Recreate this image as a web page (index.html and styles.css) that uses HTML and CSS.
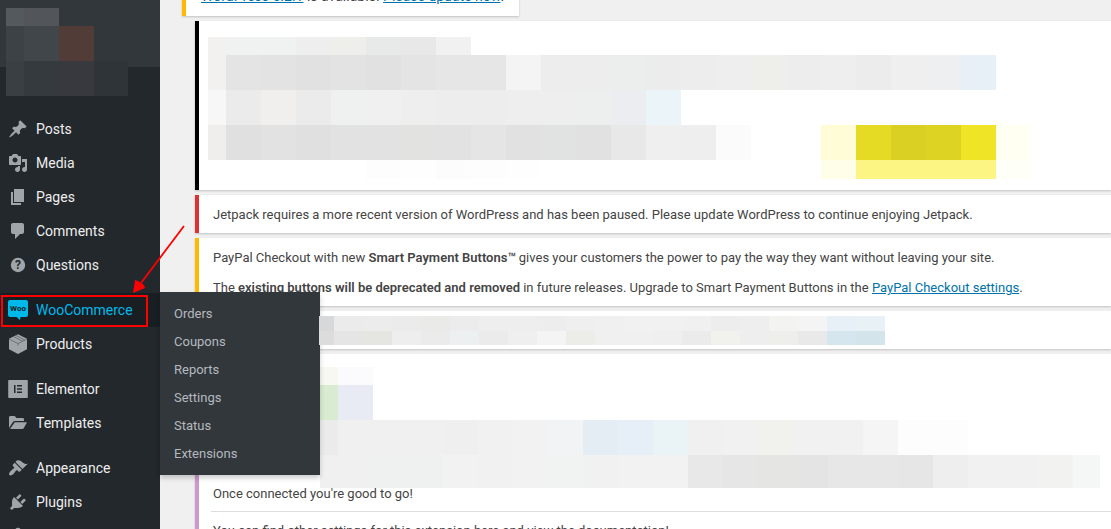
FILE: index.html
```
<!DOCTYPE html>
<html lang="en">
<head>
    <meta charset="UTF-8">
    <meta name="viewport" content="width=device-width, initial-scale=1.0">
    <title>WordPress Admin</title>
    <link rel="stylesheet" href="styles.css">
</head>
<body>
    <div class="admin">
        <nav class="sidebar" aria-label="Main menu">
            <div class="menu-top">
                <div class="mosaic user-mosaic" data-mosaic="user"></div>
            </div>
            <ul class="menu">
                <li class="menu-item">
                    <a href="#"><svg class="icon" viewBox="0 0 20 20"><path d="M10.44 3.02l1.82-1.82 6.36 6.35-1.83 1.82c-1.05-.68-2.48-.57-3.41.36l-.75.75c-.92.93-1.04 2.35-.35 3.41l-1.83 1.82-2.41-2.41-2.8 2.79c-.42.42-3.38 2.71-3.8 2.29s1.86-3.39 2.28-3.81l2.79-2.79L4.1 9.36l1.83-1.82c1.05.69 2.48.57 3.4-.36l.75-.75c.93-.92 1.05-2.35.36-3.41z"/></svg>Posts</a>
                </li>
                <li class="menu-item">
                    <a href="#"><svg class="icon" viewBox="0 0 20 20"><path d="M13 11V4c0-.55-.45-1-1-1h-1.67L9 1H5L3.67 3H2c-.55 0-1 .45-1 1v7c0 .55.45 1 1 1h10c.55 0 1-.45 1-1zM7 4.5c1.38 0 2.5 1.12 2.5 2.5S8.38 9.5 7 9.5 4.5 8.38 4.5 7 5.62 4.5 7 4.5zM14 6h5v10.5c0 1.38-1.12 2.5-2.5 2.5S14 17.88 14 16.5s1.12-2.5 2.5-2.5c.17 0 .34.02.5.05V9h-3V6zm-4 8.05V13h2v3.5c0 1.38-1.12 2.5-2.5 2.5S7 17.88 7 16.5 8.12 14 9.5 14c.17 0 .34.02.5.05z"/></svg>Media</a>
                </li>
                <li class="menu-item">
                    <a href="#"><svg class="icon" viewBox="0 0 20 20"><path d="M6 15V2h10v13H6zm-1 1h8v2H3V5h2v11z"/></svg>Pages</a>
                </li>
                <li class="menu-item">
                    <a href="#"><svg class="icon" viewBox="0 0 20 20"><path d="M5 2h9c1.1 0 2 .9 2 2v7c0 1.1-.9 2-2 2h-2l-5 5v-5H5c-1.1 0-2-.9-2-2V4c0-1.1.9-2 2-2z"/></svg>Comments</a>
                </li>
                <li class="menu-item">
                    <a href="#"><svg class="icon" viewBox="0 0 20 20"><circle cx="10" cy="10" r="7.2"/><text class="icon-help" x="10" y="14">?</text></svg>Questions</a>
                </li>
                <li class="separator"></li>
                <li class="menu-item current">
                    <a href="#"><svg class="icon" viewBox="0 0 20 20"><path d="M2 0h16a2 2 0 0 1 2 2v13a2 2 0 0 1-2 2h-5.500l-.5 3-3.500-3H2a2 2 0 0 1-2-2V2a2 2 0 0 1 2-2z"/><text class="icon-woo" x="10" y="11">Woo</text></svg>WooCommerce</a>
                    <ul class="submenu">
                        <li><a href="#">Orders</a></li>
                        <li><a href="#">Coupons</a></li>
                        <li><a href="#">Reports</a></li>
                        <li><a href="#">Settings</a></li>
                        <li><a href="#">Status</a></li>
                        <li><a href="#">Extensions</a></li>
                    </ul>
                </li>
                <li class="menu-item">
                    <a href="#"><svg class="icon" viewBox="0 0 20 20"><path d="M10 .2l9 4.600v10.400l-9 4.800-9-4.800V4.800z"/><path class="icon-line" d="M1 5l9 4.600L19 5M5.500 2.600l9 4.700M7.800 1.400l9 4.700M10 9.600v2"/></svg>Products</a>
                </li>
                <li class="separator"></li>
                <li class="menu-item">
                    <a href="#"><svg class="icon" viewBox="0 0 20 20"><path fill-rule="evenodd" d="M1 1h18a.8.8 0 0 1 .8.8v16.400a.8.8 0 0 1-.8.800H1a.8.8 0 0 1-.8-.8V1.800A.8.8 0 0 1 1 1zM6 6v8h1.500V6zM9 6v1.500h5V6zM9 9.250v1.500h5v-1.500zM9 12.500V14h5v-1.500z"/></svg>Elementor</a>
                </li>
                <li class="menu-item">
                    <a href="#"><svg class="icon" viewBox="0 0 20 20"><path d="M1 15V4.500C1 3.700 1.600 3 2.400 3h3.800c.6 0 1 .2 1.300.7L8.300 5h6.300c.8 0 1.400.6 1.400 1.400V8H7c-1 0-1.700.4-2.200 1.200z"/><path d="M6.700 9.200H19L15.700 15.300c-.3.500-.7.700-1.200.7H2z"/></svg>Templates</a>
                </li>
                <li class="separator"></li>
                <li class="menu-item">
                    <a href="#"><svg class="icon" viewBox="0 0 20 20"><path d="M14.480 11.060L7.410 3.990l1.500-1.500c.5-.56 2.300-.47 3.510.32 1.210.8 1.430 1.280 2.910 2.100 1.180.64 2.450 1.260 4.450.85zm-.71.710L6.700 4.700 4.930 6.470c-.39.39-.39 1.020 0 1.410l1.060 1.060c.39.39.39 1.030 0 1.420-.6.600-1.430 1.110-2.210 1.690-.35.260-.7.530-1.010.840C1.430 14.230.4 16.080 1.400 17.070c.99 1 2.840-.03 4.180-1.360.31-.31.580-.66.850-1.020.57-.78 1.080-1.610 1.690-2.210.39-.39 1.020-.39 1.410 0l1.060 1.060c.39.39 1.020.39 1.410 0z"/></svg>Appearance</a>
                </li>
                <li class="menu-item">
                    <a href="#"><svg class="icon" viewBox="0 0 20 20"><path d="M13.110 4.360L9.870 7.600 8 5.730l3.240-3.240c.35-.34 1.050-.2 1.560.32.52.51.66 1.210.31 1.550zm-8 1.770l.91-1.120 9.010 9.010-1.190.84c-.71.71-2.630 1.160-3.820 1.160H6.140L4.900 17.260c-.59.59-1.540.59-2.120 0-.59-.58-.59-1.530 0-2.120l1.240-1.240v-3.880c0-1.130.4-3.190 1.090-3.890zm7.260 3.970l3.240-3.240c.34-.35 1.040-.21 1.550.31.52.51.66 1.210.31 1.550l-3.240 3.250z"/></svg>Plugins</a>
                </li>
                <li class="menu-item">
                    <a href="#" aria-label="Users"><svg class="icon" viewBox="0 0 20 20"><ellipse cx="10" cy="5.500" rx="3" ry="3.800"/><path d="M4 18v-4c0-2 2-3.500 4-3.500l2 2 2-2c2 0 4 1.500 4 3.500v4z"/></svg></a>
                </li>
            </ul>
        </nav>

        <main class="content">
            <div class="update-nag"><a href="#">WordPress 5.2.1</a> is available! <a href="#">Please update now</a>.</div>

            <div class="notice notice-black notice-mosaic">
                <div class="mosaic" data-mosaic="banner"></div>
            </div>
            <div class="notice notice-error">
                <p>Jetpack requires a more recent version of WordPress and has been paused. Please update WordPress to continue enjoying Jetpack.</p>
            </div>
            <div class="notice notice-warning">
                <p>PayPal Checkout with new <strong>Smart Payment Buttons™</strong> gives your customers the power to pay the way they want without leaving your site.</p>
                <p>The <strong>existing buttons will be deprecated and removed</strong> in future releases. Upgrade to Smart Payment Buttons in the <a href="#">PayPal Checkout settings</a>.</p>
            </div>
            <div class="notice notice-line">
                <div class="mosaic" data-mosaic="line"></div>
            </div>
            <div class="notice notice-purple">
                <div class="mosaic" data-mosaic="connect"></div>
                <p>Once connected you're good to go!</p>
                <hr>
                <p>You can find other settings for this extension here and view the documentation!</p>
            </div>
        </main>

        <svg class="arrow" viewBox="0 0 56 72" aria-hidden="true">
            <path d="M54 3L11 60" stroke="#f00" stroke-width="1.800"/>
            <path d="M3 70L5 57l3 1 6 4 1 3z" fill="#f00"/>
        </svg>
        <div class="highlight"></div>
    </div>

    <script src="script.js"></script>
</body>
</html>
```
FILE: styles.css
```
* {
    box-sizing: border-box;
}
body {
    margin: 0;
    background-color: #f0f0f0;
    color: #444;
    font-family: 'Segoe UI', Roboto, 'Noto Sans', sans-serif;
    font-size: 13px;
    line-height: 20px;
}
a {
    color: #0073aa;
}
strong {
    font-weight: 600;
}
.admin {
    position: relative;
    display: flex;
    height: 100vh;
    overflow: hidden;
}

/* sidebar */
.sidebar {
    position: relative;
    z-index: 2;
    flex: 0 0 160px;
    background-color: #23282d;
}
.menu-top {
    height: 67px;
    margin-bottom: 45px;
    padding: 8px 6px;
    background-color: #32373c;
}
.menu,
.submenu {
    margin: 0;
    padding: 0;
    list-style: none;
}
.menu-item {
    position: relative;
}
.menu-item > a {
    display: flex;
    align-items: center;
    gap: 8px;
    height: 34px;
    padding: 0 8px;
    color: #eee;
    font-size: 14px;
    text-decoration: none;
}
.separator {
    height: 11px;
}
.icon {
    width: 20px;
    height: 20px;
    fill: #a0a5aa;
}
.icon-help {
    fill: #23282d;
    font-size: 12px;
    font-weight: bold;
    text-anchor: middle;
}
.icon-woo {
    fill: #191e23;
    font-size: 8px;
    font-weight: bold;
    text-anchor: middle;
}
.icon-line {
    fill: none;
    stroke: #6c7177;
    stroke-width: 1;
}
.current > a {
    background-color: #191e23;
    color: #00b9eb;
}
.current .icon {
    fill: #00b9eb;
}
.submenu {
    position: absolute;
    top: -1px;
    left: 160px;
    width: 160px;
    padding: 7px 0 8px;
    background-color: #32373c;
    box-shadow: 0 3px 5px rgba(0,0,0,0.2);
}
.submenu a {
    display: block;
    padding: 5px 14px 3px;
    color: #b4b9be;
    text-decoration: none;
}

/* notices */
.content {
    flex: 1;
    min-width: 0;
    margin-top: -26px;
    padding-left: 22px;
}
.update-nag {
    width: fit-content;
    padding: 12px 15px 10px;
    border-left: 4px solid #ffb900;
    background-color: #fff;
    box-shadow: 0 1px 2px rgba(0,0,0,0.2);
    font-size: 14px;
}
.notice {
    margin: 5px 0 0 13px;
    padding: 1px 12px;
    border-left: 4px solid #000;
    background-color: #fff;
    box-shadow: 0 1px 2px rgba(0,0,0,0.2);
}
.notice p {
    margin: 6px 0;
    padding: 3px 2px 1px;
}
.notice hr {
    margin: 0 -12px 0 0;
    border: 0;
    border-top: 1px solid #ddd;
}
.notice-mosaic {
    padding: 16px 9px 11px;
}
.notice-error {
    border-left-color: #dc3232;
}
.notice-warning {
    border-left-color: #ffb900;
}
.notice-line {
    padding: 5px 120px 4px;
}
.notice-line .mosaic {
    position: relative;
    z-index: 3;
}
.notice-purple {
    border-left-color: #c9c;
    padding-top: 13px;
}
.notice-purple .mosaic {
    margin: 0 0 -13px 109px;
}

/* pixelated areas */
.mosaic svg {
    display: block;
}
.user-mosaic {
    position: absolute;
}

/* annotation */
.highlight {
    position: absolute;
    z-index: 4;
    top: 295px;
    left: 1px;
    width: 147px;
    height: 32px;
    border: 2px solid #f00;
}
.arrow {
    position: absolute;
    z-index: 4;
    top: 223px;
    left: 130px;
    width: 56px;
    height: 72px;
}
```
FILE: script.js
```
// xs: column edges, ys: row edges, rows: one colour per column ('-' = empty)
const mosaics = {
    user: {
        xs: [0, 18, 53, 88, 122],
        ys: [0, 18, 53, 88],
        rows: [
            '54595d 525559',
            '3d4246 41464a 513c38',
            '3a3f43 353a3e 38393e 2f3438'
        ]
    },
    banner: {
        xs: steps(0, 18, 35, 24),
        ys: [0, 18, 53, 88, 123, 142],
        rows: [
            'f3f1ef eff2f0 eff2f0 eeeeee eeeeeb e8eae9 e8e8e8 f1f1f1',
            'f3f1ef e4e4e4 e3e3e3 e1e1e1 e3e3e3 e1e1e1 e4e4e4 e6e6e6 e6e6e6 f4f4f4 ededed ededed ebeeec ececec ededed eeeeee eeeeea ededed eeeeee ececec efefef eeeff1 e7f0f7',
            'f7f7f7 ebebeb f0efed ebebeb eef1f0 f0f0f0 eeeeee ededed ededed eeeeee eeeeee ecefed ecedf0 ebf4f8',
            'efeeec e0e0e0 e2e2e2 e0e0e0 e2e2e2 e2e2e2 e2e2e0 e2e2e2 e5e5e5 e1e1e1 e1e3e2 e1e1e1 e8e8e8 efefef eeeeee fbfbfb - - fffcd6 e5db25 dad023 ddd323 efe526 fffff2',
            '- - - - - fdfdfd fefefe fcfcfc fdfdfd fefefe - - - - - - - - fffee8 fcf584 fcf584 fcf584 fcf584 fefff6'
        ]
    },
    line: {
        xs: steps(0, 15, 29, 20),
        ys: [0, 15, 29],
        rows: [
            'd7d8da ebebeb ececec ebebeb eaeae8 ececec eeeeee eeeeee ededed efefef f0f0f0 f1f1f1 f1f1f1 f0f0f0 ededed eeeeee f3f3f2 f4f4f4 e7eff7 e8f2f6',
            'dcdcdc e5e5e5 e5e5e2 eeeeee ebebeb edf0f0 ebebeb efefef f4f4f4 ecece9 f0f0f0 f0f0f0 efefef ebebeb f1f1ee eeeeee eeeeea e9e9e9 d5e6ee d3e4eb'
        ]
    },
    connect: {
        xs: steps(0, 18, 35, 22).concat(780),
        ys: [0, 18, 53, 88, 121],
        rows: [
            'f7f8f2 fbfbfe',
            'd9ebd0 e8ebf3',
            'ebebeb f0f0f0 f0f0f0 f0f0f0 efefef f1f1f1 f2f2f2 f1f3f4 e4edf4 e6eff7 eaf3f6 f0f0f0 f1f1f1 f1f1ee f1f1f1 f1f1f1 f5f5f5 fdfdfd fdfdfd',
            'f0f0f0 f0f0f0 eff1f0 eff1f0 f2f2f2 f1f1f1 f2f2f2 f0f3f2 f1f1f1 f2f2f2 f2f2f2 e8e8e8 e6e6e6 e5e5e4 e4e4e4 e7e7e7 e7e7e7 e6e6e6 eeeeee f1f1f1 f1f1f1 f2f2f0 f4f7f6'
        ]
    }
};

// first column has its own width, the others are all equal
function steps(start, first, width, count) {
    const edges = [start];
    for (let i = 0; i < count; i++) {
        edges.push(start + first + i * width);
    }
    return edges;
}

function drawMosaic(box) {
    const { xs, ys, rows } = mosaics[box.dataset.mosaic];
    const width = xs[xs.length - 1];
    const height = ys[ys.length - 1];
    let rects = '';
    rows.forEach((row, r) => {
        row.split(' ').forEach((color, c) => {
            if (color === '-') return;
            rects += `<rect x="${xs[c]}" y="${ys[r]}" width="${xs[c + 1] - xs[c]}" height="${ys[r + 1] - ys[r]}" fill="#${color}"/>`;
        });
    });
    box.innerHTML = `<svg width="${width}" height="${height}" shape-rendering="crispEdges" aria-hidden="true">${rects}</svg>`;
}

document.querySelectorAll('.mosaic').forEach(drawMosaic);
```
